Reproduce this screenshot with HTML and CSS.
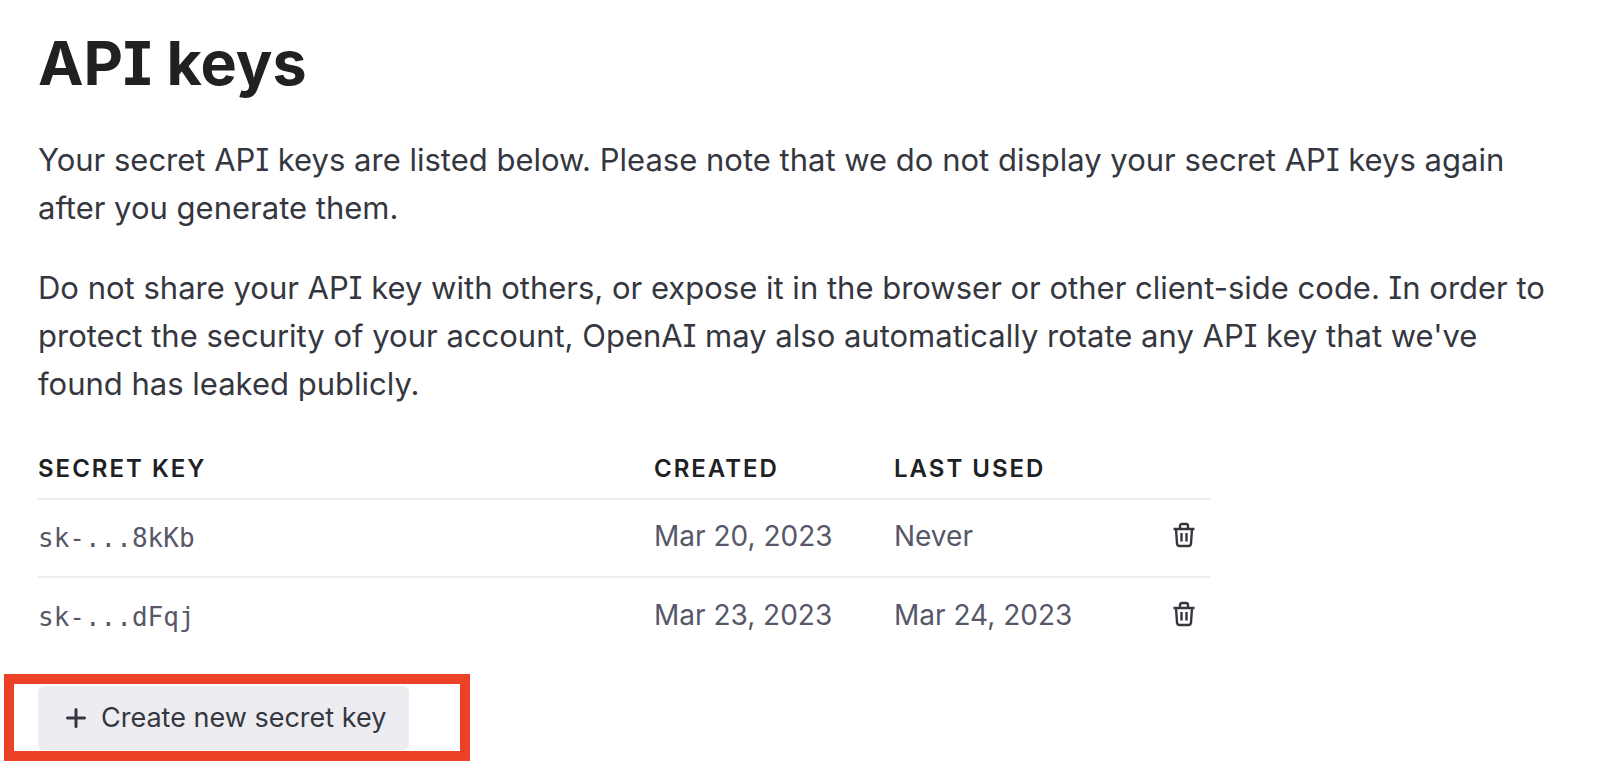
FILE: index.html
```html
<!DOCTYPE html>
<html lang="en">
<head>
  <meta charset="UTF-8" />
  <meta name="viewport" content="width=device-width, initial-scale=1.0" />
  <title>API keys</title>
  <link rel="stylesheet" href="styles.css">
</head>
<body>
  <main class="page">
    <h1>API keys</h1>

    <p>Your secret API keys are listed below. Please note that we do not display your secret API keys again after you generate them.</p>
    <p>Do not share your API key with others, or expose it in the browser or other client-side code. In order to protect the security of your account, OpenAI may also automatically rotate any API key that we've found has leaked publicly.</p>

    <table class="keys-table">
      <thead>
        <tr>
          <th class="col-key">Secret key</th>
          <th class="col-date">Created</th>
          <th>Last used</th>
          <th class="col-action"></th>
        </tr>
      </thead>
      <tbody>
        <tr>
          <td class="key">sk-...8kKb</td>
          <td>Mar 20, 2023</td>
          <td>Never</td>
          <td class="col-action">
            <button class="delete-btn" aria-label="Delete key sk-...8kKb">
              <svg viewBox="0 0 24 26"><path d="M1.5 7h21M8 7V4q0-2 2-2h4q2 0 2 2v3M4 7l1 14.500q.2 2.500 2.500 2.500h9q2.300 0 2.500-2.500L20 7M9.500 11v8.500M14.500 11v8.500"/></svg>
            </button>
          </td>
        </tr>
        <tr>
          <td class="key">sk-...dFqj</td>
          <td>Mar 23, 2023</td>
          <td>Mar 24, 2023</td>
          <td class="col-action">
            <button class="delete-btn" aria-label="Delete key sk-...dFqj">
              <svg viewBox="0 0 24 26"><path d="M1.5 7h21M8 7V4q0-2 2-2h4q2 0 2 2v3M4 7l1 14.500q.2 2.500 2.500 2.500h9q2.300 0 2.500-2.500L20 7M9.500 11v8.500M14.500 11v8.500"/></svg>
            </button>
          </td>
        </tr>
      </tbody>
    </table>

    <div class="highlight">
      <button class="create-btn">
        <svg viewBox="0 0 20 20"><path d="M10 1.500v17M1.500 10h17"/></svg>
        Create new secret key
      </button>
    </div>
  </main>
</body>
</html>
```
FILE: styles.css
```css
* {
  box-sizing: border-box;
}
body {
  margin: 0;
  background: #fff;
  color: #353740;
  font-family: Inter, "Liberation Sans", sans-serif;
  font-size: 31px;
  line-height: 48px;
  /* serifed capital I */
  font-feature-settings: "cv08";
}
.page {
  padding: 22px 60px 22px 38px;
}
h1 {
  margin: 0 0 32px;
  color: #202123;
  font-size: 61px;
  font-weight: 700;
  line-height: 82px;
}
p {
  margin: 0 0 32px;
}
.keys-table {
  width: 100%;
  max-width: 1172px;
  border-collapse: collapse;
  table-layout: fixed;
}
th, td {
  padding: 0;
  text-align: left;
}
th {
  height: 59px;
  border-bottom: 2px solid #ececf1;
  color: #202123;
  font-size: 24px;
  font-weight: 600;
  letter-spacing: 2px;
  text-transform: uppercase;
}
td {
  height: 78px;
  padding-bottom: 4px;
  color: #565869;
  font-size: 28px;
}
tbody tr + tr td {
  border-top: 2px solid #ececf1;
}
.col-key {
  width: 616px;
}
.col-date {
  width: 240px;
}
.col-action {
  width: 60px;
  padding: 0 14px 0 0;
  text-align: right;
}
.key {
  padding-top: 4px;
  font-family: "DejaVu Sans Mono", monospace;
  font-size: 26px;
}
button {
  border: none;
  font: inherit;
  cursor: pointer;
}
svg {
  fill: none;
  stroke: #353740;
}
.delete-btn {
  padding: 0;
  background: none;
  line-height: 26px;
}
.delete-btn svg {
  display: block;
  width: 24px;
  height: 26px;
  stroke-width: 2.4;
}
.highlight {
  width: fit-content;
  margin: 19px 0 0 -34px;
  padding: 2px 51px 1px 24px;
  border: 10px solid #eb4127;
}
.create-btn {
  display: flex;
  align-items: center;
  gap: 15px;
  height: 64px;
  padding: 0 23px 0 28px;
  border-radius: 6px;
  background: #ececf1;
  color: #353740;
  font-size: 27px;
}
.create-btn svg {
  width: 20px;
  height: 20px;
  stroke-width: 3;
  stroke-linecap: round;
}
```
